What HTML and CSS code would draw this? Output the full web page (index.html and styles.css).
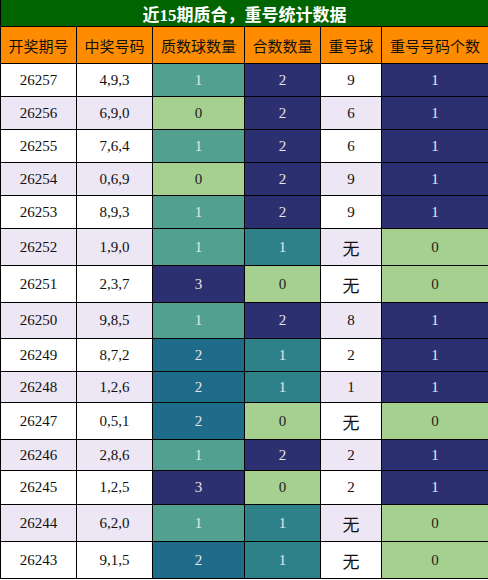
FILE: index.html
```html
<!DOCTYPE html>
<html lang="zh">
<head>
    <meta charset="UTF-8">
    <title>近15期质合，重号统计数据</title>
    <link rel="stylesheet" href="styles.css">
</head>
<body>
    <table class="stats">
        <colgroup>
            <col class="c-issue">
            <col class="c-code">
            <col class="c-prime">
            <col class="c-comp">
            <col class="c-rep">
            <col class="c-repn">
        </colgroup>
        <thead>
            <tr class="title-row">
                <th colspan="6">近15期质合，重号统计数据</th>
            </tr>
            <tr class="head-row">
                <th>开奖期号</th>
                <th>中奖号码</th>
                <th>质数球数量</th>
                <th>合数数量</th>
                <th>重号球</th>
                <th>重号号码个数</th>
            </tr>
        </thead>
        <tbody>
            <tr><td>26257</td><td>4,9,3</td><td class="v1">1</td><td class="n">2</td><td>9</td><td class="n">1</td></tr>
            <tr><td>26256</td><td>6,9,0</td><td class="g">0</td><td class="n">2</td><td>6</td><td class="n">1</td></tr>
            <tr><td>26255</td><td>7,6,4</td><td class="v1">1</td><td class="n">2</td><td>6</td><td class="n">1</td></tr>
            <tr><td>26254</td><td>0,6,9</td><td class="g">0</td><td class="n">2</td><td>9</td><td class="n">1</td></tr>
            <tr><td>26253</td><td>8,9,3</td><td class="v1">1</td><td class="n">2</td><td>9</td><td class="n">1</td></tr>
            <tr class="tall"><td>26252</td><td>1,9,0</td><td class="v1">1</td><td class="t">1</td><td class="none">无</td><td class="g">0</td></tr>
            <tr class="tall"><td>26251</td><td>2,3,7</td><td class="n">3</td><td class="g">0</td><td class="none">无</td><td class="g">0</td></tr>
            <tr class="mid"><td>26250</td><td>9,8,5</td><td class="v1">1</td><td class="n">2</td><td>8</td><td class="n">1</td></tr>
            <tr><td>26249</td><td>8,7,2</td><td class="v2">2</td><td class="t">1</td><td>2</td><td class="n">1</td></tr>
            <tr class="short"><td>26248</td><td>1,2,6</td><td class="v2">2</td><td class="t">1</td><td>1</td><td class="n">1</td></tr>
            <tr class="tall"><td>26247</td><td>0,5,1</td><td class="v2">2</td><td class="g">0</td><td class="none">无</td><td class="g">0</td></tr>
            <tr class="short"><td>26246</td><td>2,8,6</td><td class="v1">1</td><td class="n">2</td><td>2</td><td class="n">1</td></tr>
            <tr class="med"><td>26245</td><td>1,2,5</td><td class="n">3</td><td class="g">0</td><td>2</td><td class="n">1</td></tr>
            <tr class="tall"><td>26244</td><td>6,2,0</td><td class="v1">1</td><td class="t">1</td><td class="none">无</td><td class="g">0</td></tr>
            <tr class="tall"><td>26243</td><td>9,1,5</td><td class="v2">2</td><td class="t">1</td><td class="none">无</td><td class="g">0</td></tr>
        </tbody>
    </table>
</body>
</html>
```

FILE: styles.css
```css
body {
    margin: 0;
    background: #fff;
    font-family: 'Liberation Serif', 'Noto Sans CJK SC', serif;
    color: #111;
}

.stats {
    border-collapse: collapse;
    width: 488px;
    table-layout: fixed;
    text-align: center;
    font-size: 15px;
}

.stats th,
.stats td {
    border: 1px solid #000;
    padding: 0;
}

.title-row th {
    background: #006400;
    color: #fff;
    font-size: 17px;
    font-weight: bold;
    height: 26px;
    border-top: none;
}

.head-row th {
    background: #ff8c00;
    color: #111;
    font-weight: normal;
    height: 36px;
    white-space: nowrap;
}

.c-issue { width: 76px; }
.c-code { width: 76px; }
.c-prime { width: 92px; }
.c-comp { width: 76px; }
.c-rep { width: 61px; }
.c-repn { width: 107px; }

.stats td {
    height: 32px;
}

.stats tr.tall td {
    height: 36px;
}

.stats tr.mid td {
    height: 35px;
}

.stats tr.med td {
    height: 33px;
}

.stats tr.short td {
    height: 30px;
}

.stats tbody tr:nth-child(even) td {
    background: #ede6f5;
}

.stats tbody tr td.none {
    font-size: 17px;
}

/* colour scale cells */
.stats tbody tr td.g {
    background: #a6d08f;
    color: #222;
}

.stats tbody tr td.v1 {
    background: #52a08f;
    color: #e6e6e6;
}

.stats tbody tr td.t {
    background: #2e8189;
    color: #e6e6e6;
}

.stats tbody tr td.v2 {
    background: #1f6b8a;
    color: #e6e6e6;
}

.stats tbody tr td.n {
    background: #2c3070;
    color: #e6e6e6;
}
```
